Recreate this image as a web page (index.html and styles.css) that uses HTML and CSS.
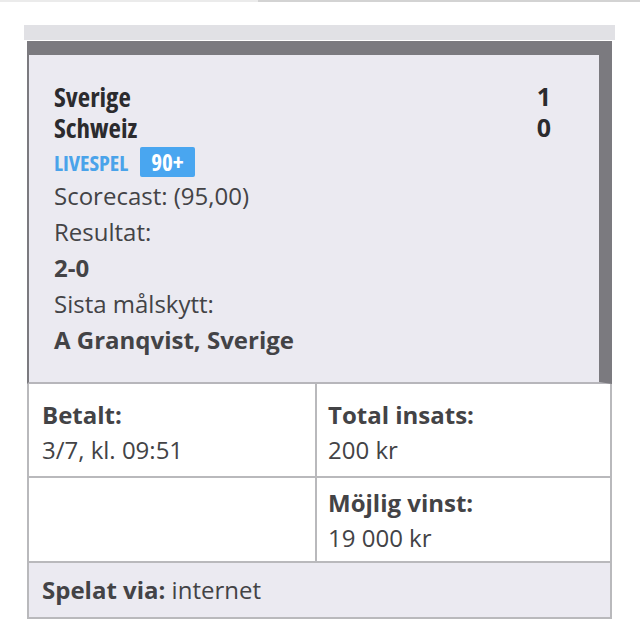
FILE: index.html
```html
<!DOCTYPE html>
<html lang="sv">
<head>
  <meta charset="UTF-8">
  <title>Kupong</title>
<link rel="stylesheet" href="styles.css">
</head>
<body>
<div class="topbar">
  <div class="topbar-a"></div>
  <div class="topbar-b"></div>
</div>
<div class="ticket">
  <div class="match">
    <div class="teams">
      <div class="team"><span>Sverige</span><span class="score">1</span></div>
      <div class="team"><span>Schweiz</span><span class="score">0</span></div>
    </div>
    <div class="live">
      <span class="live-label">LIVESPEL</span>
      <span class="live-min">90+</span>
    </div>
    <div class="line">Scorecast: (95,00)</div>
    <div class="line">Resultat:</div>
    <div class="line strong">2-0</div>
    <div class="line">Sista målskytt:</div>
    <div class="line strong">A Granqvist, Sverige</div>
  </div>
  <div class="grid">
    <div class="cell first">
      <div class="label">Betalt:</div>
      <div class="value">3/7, kl. 09:51</div>
    </div>
    <div class="cell first right">
      <div class="label">Total insats:</div>
      <div class="value">200 kr</div>
    </div>
    <div class="cell"></div>
    <div class="cell right">
      <div class="label">Möjlig vinst:</div>
      <div class="value">19 000 kr</div>
    </div>
  </div>
  <div class="via"><b>Spelat via:</b> internet</div>
</div>
</body>
</html>
```

FILE: styles.css
```css
* {
  box-sizing: border-box;
}
body {
  margin: 0;
  background: #fff;
  font-family: "Open Sans", "Liberation Sans", sans-serif;
  color: #434346;
}
.topbar {
  display: flex;
  height: 2px;
}
.topbar-a {
  width: 258px;
  background: #ebebeb;
}
.topbar-b {
  flex: 1;
  background: #d3d3d3;
}
.ticket {
  width: 591px;
  margin: 23px 0 0 24px;
  border-top: 15px solid #e1e1e5;
  padding: 1px 3px 0 3px;
  background: #fff;
}
.match {
  background: #ebeaf1;
  border-top: 14px solid #7b7a7f;
  border-left: 2px solid #7b7a7f;
  border-right: 13px solid #7b7a7f;
  border-bottom: 2px solid #b7b6bb;
  padding: 26px 48px 24px 25px;
}
.teams {
  font-weight: 700;
  font-stretch: 75%;
  font-size: 27px;
  line-height: 31px;
  color: #2b2b2e;
}
.team {
  display: flex;
  justify-content: space-between;
}
.score {
  font-stretch: 100%;
  font-size: 25px;
}
.live {
  display: flex;
  align-items: center;
  gap: 12px;
  height: 32px;
  margin: 3px 0 0;
}
.live-label {
  color: #4aa3ea;
  font-weight: 700;
  font-stretch: 75%;
  font-size: 22px;
}
.live-min {
  background: #49a6f0;
  color: #fff;
  font-weight: 700;
  font-stretch: 75%;
  font-size: 23px;
  line-height: 30px;
  padding: 0 11px;
  border-radius: 2px;
}
.line {
  font-size: 24px;
  line-height: 36px;
}
.strong {
  font-weight: 700;
}
.grid {
  display: grid;
  grid-template-columns: 286px 1fr;
  border-left: 2px solid #b9b9bc;
  border-right: 2px solid #b9b9bc;
}
.cell {
  padding: 7px 13px 6px;
  border-bottom: 2px solid #b9b9bc;
  min-height: 85px;
}
.cell.first {
  padding-top: 13px;
  min-height: 94px;
}
.cell.right {
  border-left: 2px solid #b9b9bc;
  padding-left: 11px;
}
.label {
  font-size: 24px;
  font-weight: 700;
  line-height: 35px;
}
.value {
  font-size: 24px;
  line-height: 35px;
}
.via {
  background: #ebeaf1;
  border: 2px solid #b9b9bc;
  border-top: 0;
  padding: 10px 13px;
  font-size: 24px;
  line-height: 34px;
}
.via b {
  font-weight: 700;
}
```
